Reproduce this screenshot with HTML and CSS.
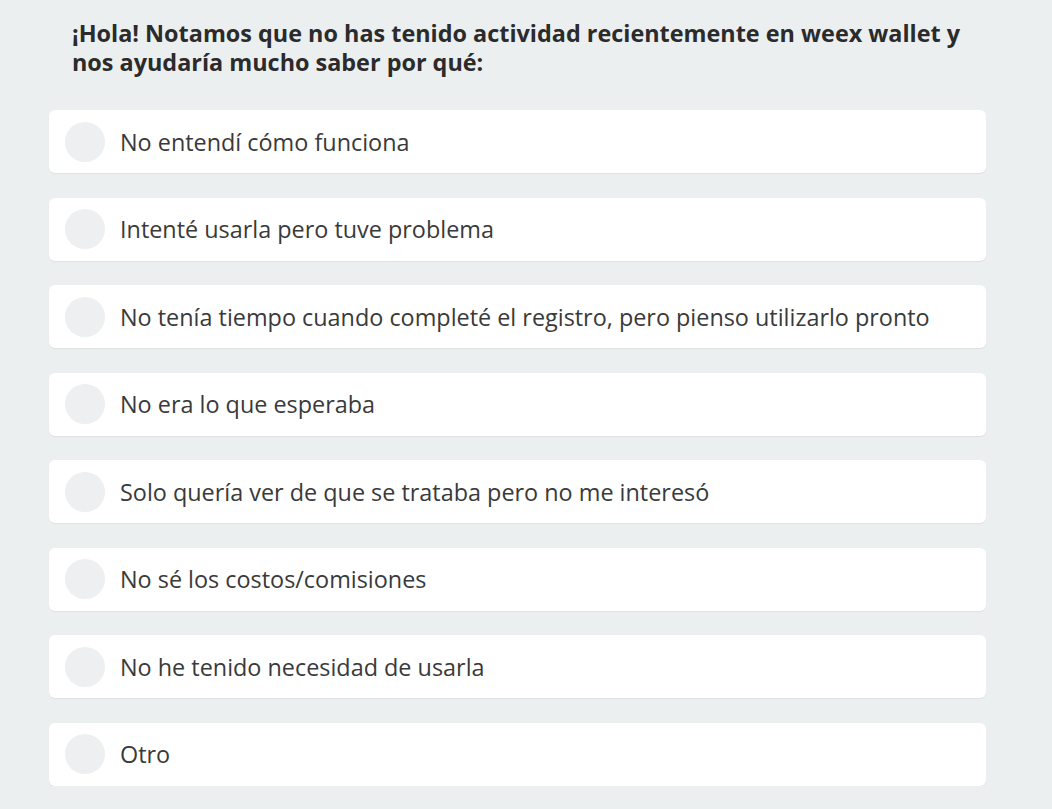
FILE: index.html
```html
<!DOCTYPE html>
<html lang="es">
<head>
<meta charset="utf-8">
<link rel="stylesheet" href="styles.css">
</head>
<body>
<div class="survey">
  <h1 class="question">¡Hola! Notamos que no has tenido actividad recientemente en weex wallet y nos ayudaría mucho saber por qué:</h1>
  <div class="options">
    <div class="option"><span class="radio"></span><span class="label">No entendí cómo funciona</span></div>
    <div class="option"><span class="radio"></span><span class="label">Intenté usarla pero tuve problema</span></div>
    <div class="option"><span class="radio"></span><span class="label">No tenía tiempo cuando completé el registro, pero pienso utilizarlo pronto</span></div>
    <div class="option"><span class="radio"></span><span class="label">No era lo que esperaba</span></div>
    <div class="option"><span class="radio"></span><span class="label">Solo quería ver de que se trataba pero no me interesó</span></div>
    <div class="option"><span class="radio"></span><span class="label">No sé los costos/comisiones</span></div>
    <div class="option"><span class="radio"></span><span class="label">No he tenido necesidad de usarla</span></div>
    <div class="option"><span class="radio"></span><span class="label">Otro</span></div>
  </div>
</div>
</body>
</html>
```
FILE: styles.css
```css
html, body {
  margin: 0;
  padding: 0;
  background: #eceff0;
}
body {
  font-family: "Open Sans", "Noto Sans", sans-serif;
  color: #333;
}
.survey {
  width: 937px;
  margin-left: 49px;
  padding-top: 19px;
}
.question {
  margin: 0 0 34px 0;
  padding-left: 23px;
  padding-right: 10px;
  font-size: 23.4px;
  line-height: 28.5px;
  font-weight: 700;
  color: #2b2b2b;
}
.options {
  display: flex;
  flex-direction: column;
  gap: 24.5px;
}
.option {
  display: flex;
  align-items: center;
  height: 63px;
  box-sizing: border-box;
  padding-left: 16px;
  background: #fff;
  border-radius: 6px;
  box-shadow: 0 1px 1px rgba(0,0,0,0.06);
}
.radio {
  width: 40px;
  height: 40px;
  border-radius: 50%;
  background: #edeff0;
  flex: none;
  margin-right: 15px;
}
.label {
  font-size: 23.4px;
  color: #3a3a3a;
}
```
